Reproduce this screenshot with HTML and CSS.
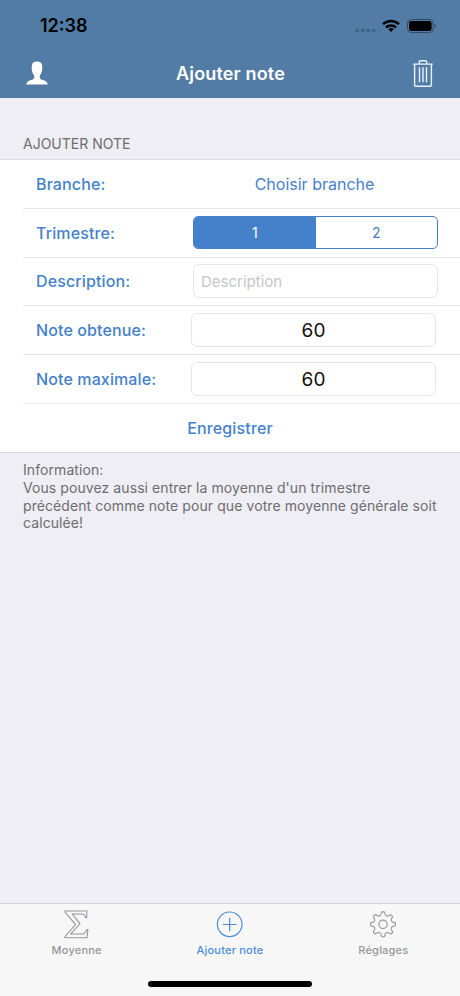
FILE: index.html
```html
<!DOCTYPE html>
<html lang="fr">
<head>
  <meta charset="UTF-8" />
  <meta name="viewport" content="width=device-width, initial-scale=1.0"/>
  <title>Ajouter note</title>
  <link rel="stylesheet" href="styles.css">
</head>
<body>
  <header>
    <div class="status-bar">
      <span class="time">12:38</span>
      <div class="status-icons">
        <svg class="signal" width="21" height="5" viewBox="0 0 21 5">
          <circle cx="2.2" cy="2.5" r="1.9"/><circle cx="7.8" cy="2.5" r="1.9"/><circle cx="13.2" cy="2.5" r="1.9"/><circle cx="18.8" cy="2.5" r="1.9"/>
        </svg>
        <svg class="wifi" width="18" height="13" viewBox="0 0 18 13" fill="none" stroke="#000" stroke-width="2.5">
          <path d="M1 5.2a11.5 11.5 0 0 1 16 0"/>
          <path d="M4 8.5a7.2 7.2 0 0 1 10 0"/>
          <path d="M9 13l-2.6-2.7a3.7 3.7 0 0 1 5.2 0z" fill="#000" stroke="none"/>
        </svg>
        <svg class="battery" width="30" height="14" viewBox="0 0 30 14">
          <rect x=".5" y=".5" width="25.6" height="13" rx="3.8" fill="none" stroke="#304b64"/>
          <rect x="2" y="2" width="22.6" height="10" rx="2.4"/>
          <path d="M27.5 4.8v4.4c1.9-.8 1.9-3.6 0-4.4z" fill="#304b64"/>
        </svg>
      </div>
    </div>
    <div class="nav-bar">
      <svg class="profile" width="22" height="24" viewBox="0 0 22 24">
        <path d="M11 .5c3.600 0 5.300 1.900 5.300 5.200 0 3.600-.6 6.500-2.500 8.800v2.200c.2 1.300 1.300 1.700 3.200 2.400 2.600 1 4.300 1.700 4.700 4.400H.3c.4-2.700 2.100-3.400 4.700-4.400 1.900-.7 3-1.100 3.200-2.400v-2.200C6.300 12.200 5.700 9.300 5.700 5.700 5.700 2.400 7.400.5 11 .5z" fill="#fff"/>
      </svg>
      <h1>Ajouter note</h1>
      <svg class="trash" width="20" height="27" viewBox="0 0 20 27" fill="none" stroke="#e9f3ff" stroke-width="1.400">
        <path d="M.2 4.100h19.600M6.300 4V1.900q0-1.200 1.200-1.200h5q1.200 0 1.200 1.200V4"/>
        <path d="M1.600 4.300V25q0 1.200 1.200 1.200h14.400q1.200 0 1.200-1.200V4.300M6.500 7.300v15M10 7.300v15M13.500 7.300v15"/>
      </svg>
    </div>
  </header>

  <main>
    <h2>AJOUTER NOTE</h2>
    <form class="note-form">
      <div class="row">
        <label>Branche:</label>
        <button type="button" class="choose">Choisir branche</button>
      </div>
      <div class="row">
        <label>Trimestre:</label>
        <div class="segment">
          <button type="button" class="active">1</button>
          <button type="button">2</button>
        </div>
      </div>
      <div class="row">
        <label for="description">Description:</label>
        <input id="description" placeholder="Description">
      </div>
      <div class="row">
        <label for="obtenue">Note obtenue:</label>
        <input id="obtenue" class="number" value="60">
      </div>
      <div class="row">
        <label for="maximale">Note maximale:</label>
        <input id="maximale" class="number" value="60">
      </div>
      <button type="button" class="save">Enregistrer</button>
    </form>
    <p class="info">Information:<br>Vous pouvez aussi entrer la moyenne d'un trimestre<br>précédent comme note pour que votre moyenne générale soit<br>calculée!</p>
  </main>

  <footer>
    <nav class="tabs">
      <a class="tab">
        <svg width="28" height="30" viewBox="0 0 28 30" fill="none" stroke="currentColor" stroke-width="1.100">
          <path d="M2 2H23.800V8.800H22.800Q22 5 18.500 5H9.300L17 14.600 7.800 25H18.800Q22.300 25 23.600 20.900H24.900L24 28.700H2V27.700L12.500 15.600 2 3Z"/>
        </svg>
        <span>Moyenne</span>
      </a>
      <a class="tab selected">
        <svg width="28" height="30" viewBox="0 0 28 30" fill="none" stroke="currentColor" stroke-width="1.200">
          <circle cx="13.700" cy="15.300" r="12.300"/>
          <path d="M6.900 15.500h13.600M13.700 8.700v13.600"/>
        </svg>
        <span>Ajouter note</span>
      </a>
      <a class="tab">
        <svg width="28" height="30" viewBox="-14 -15.300 28 30" fill="none" stroke="currentColor" stroke-width="1.100" stroke-linejoin="round">
          <path d="M-1.400-12.400H1.400L2.200-9.600Q3.200-7.700 5.230-8.340L7.780-9.760 9.760-7.780 8.340-5.230Q7.700-3.200 9.600-2.200L12.400-1.400V1.400L9.600 2.200Q7.700 3.200 8.340 5.230L9.760 7.780 7.780 9.760 5.230 8.340Q3.200 7.700 2.200 9.600L1.400 12.400H-1.400L-2.200 9.600Q-3.200 7.700-5.230 8.340L-7.780 9.760-9.760 7.780-8.340 5.230Q-7.700 3.200-9.600 2.200L-12.400 1.400V-1.400L-9.600-2.200Q-7.700-3.200-8.340-5.230L-9.760-7.780-7.780-9.760-5.230-8.340Q-3.200-7.700-2.200-9.600Z"/>
          <circle r="4.200"/>
        </svg>
        <span>Réglages</span>
      </a>
    </nav>
    <div class="home-indicator"></div>
  </footer>
</body>
</html>
```
FILE: styles.css
```css
* { box-sizing: border-box; }

body {
  font-family: Inter, "Liberation Sans", sans-serif;
  margin: 0;
  height: 996px;
  display: flex;
  flex-direction: column;
  background: #efeef4;
  color: #6d6d72;
  overflow: hidden;
}

svg { display: block; }

button, input {
  font-family: inherit;
  margin: 0;
}

button {
  border: none;
  background: none;
  color: #4581cb;
  padding: 0;
}

header {
  height: 98px;
  background: #527ca5;
}

.status-bar {
  height: 50px;
  padding: 1px 23px 0 40px;
  display: flex;
  align-items: center;
  justify-content: space-between;
}

.time {
  color: #000;
  font-size: 18px;
  font-weight: 600;
}

.status-icons {
  display: flex;
  align-items: center;
}

.signal {
  fill: #3f6489;
  margin: 9px 6px 0 0;
}

.wifi { margin-right: 7px; }

.nav-bar {
  height: 48px;
  padding: 0 27px 2px 26px;
  display: flex;
  align-items: center;
  justify-content: space-between;
}

h1 {
  margin: 0;
  color: #fff;
  font-size: 18px;
  font-weight: 600;
  letter-spacing: 0.15px;
}

main { flex: 1; }

h2 {
  margin: 0;
  height: 61px;
  padding: 37px 23px 0;
  font-size: 14px;
  line-height: 18px;
  font-weight: 400;
}

.note-form {
  height: 294px;
  background: #fff;
  border-top: 1px solid #dcdbe0;
  border-bottom: 1px solid #dcdbe0;
}

.row {
  height: 48.8px;
  margin-left: 23px;
  padding: 0 22px 0 13px;
  border-bottom: 1px solid #e7e7ea;
  display: flex;
  align-items: center;
  justify-content: space-between;
}

label {
  color: #4581cb;
  font-size: 16px;
  font-weight: 500;
  letter-spacing: 0.12px;
}

.choose {
  width: 245px;
  padding-right: 2px;
  font-size: 16px;
}

.segment {
  width: 245px;
  height: 33px;
  display: flex;
  border: 1px solid #4581cb;
  border-radius: 5px;
  overflow: hidden;
}

.segment button {
  flex: 1;
  font-size: 14px;
}

.segment .active {
  background: #4581cb;
  color: #fff;
}

input {
  width: 245px;
  height: 34px;
  padding: 0 7px;
  border: 1px solid #e6e6e8;
  border-radius: 6px;
  background: #fff;
  color: #111;
  font-size: 15px;
}

input::placeholder { color: #c5c5c8; }

.number {
  margin-right: 2px;
  font-size: 19px;
  text-align: center;
}

.save {
  width: 100%;
  height: 48px;
  font-size: 16px;
  font-weight: 500;
  letter-spacing: 0.15px;
}

.info {
  margin: 0;
  padding: 8px 20px 0 23px;
  font-size: 14px;
  line-height: 17.8px;
  letter-spacing: 0.08px;
  white-space: nowrap;
}

footer {
  height: 93px;
  background: #f7f7f8;
  border-top: 1px solid #d4d4d8;
}

.tabs {
  height: 77px;
  padding-top: 5px;
  display: flex;
}

.tab {
  flex: 1;
  display: flex;
  flex-direction: column;
  align-items: center;
  gap: 4px;
  color: #96969a;
  font-size: 11px;
  line-height: 14px;
  font-weight: 500;
  letter-spacing: 0.2px;
}

.selected { color: #4a8cd6; }

.home-indicator {
  width: 164px;
  height: 6px;
  margin: 0 auto;
  border-radius: 3px;
  background: #000;
}
```
